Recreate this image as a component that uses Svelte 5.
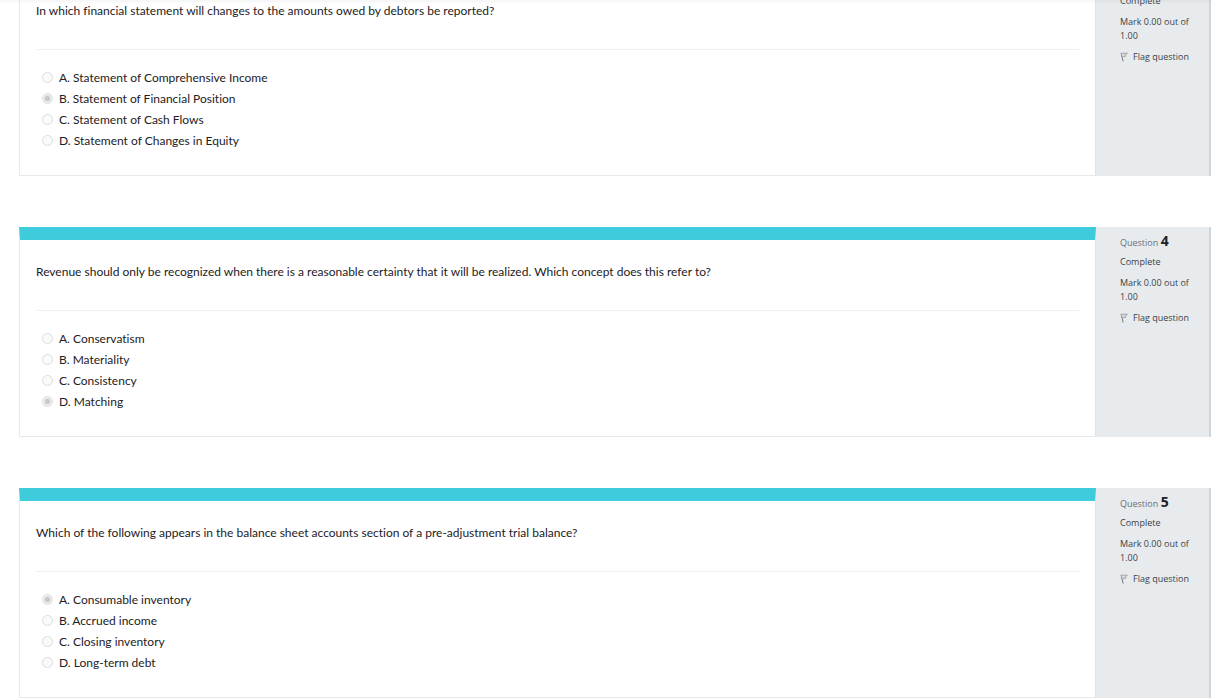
<script lang="ts">
  const questions = [
    {
      number: 3,
      text: 'In which financial statement will changes to the amounts owed by debtors be reported?',
      answers: [
        'Statement of Comprehensive Income',
        'Statement of Financial Position',
        'Statement of Cash Flows',
        'Statement of Changes in Equity'
      ],
      selected: 1
    },
    {
      number: 4,
      text: 'Revenue should only be recognized when there is a reasonable certainty that it will be realized. Which concept does this refer to?',
      answers: ['Conservatism', 'Materiality', 'Consistency', 'Matching'],
      selected: 3
    },
    {
      number: 5,
      text: 'Which of the following appears in the balance sheet accounts section of a pre-adjustment trial balance?',
      answers: ['Consumable inventory', 'Accrued income', 'Closing inventory', 'Long-term debt'],
      selected: 0
    }
  ];

  let flagged: number[] = $state([]);

  function toggleFlag(n: number) {
    flagged = flagged.includes(n) ? flagged.filter((f) => f !== n) : [...flagged, n];
  }
</script>

<main class="review">
  <div class="questions">
    {#each questions as question}
      <section class="question">
        <div class="content">
          <p class="question-text" id="q{question.number}-text">{question.text}</p>
          <div class="answers" role="radiogroup" aria-labelledby="q{question.number}-text">
            {#each question.answers as answer, i}
              <label class="answer">
                <input type="radio" name="q{question.number}" checked={question.selected === i} disabled />
                <span>{'ABCD'[i]}. {answer}</span>
              </label>
            {/each}
          </div>
        </div>

        <aside class="info">
          <h3 class="number">Question <strong>{question.number}</strong></h3>
          <div class="state">Complete</div>
          <div class="grade">Mark 0.00 out of 1.00</div>
          <button
            class="flag"
            aria-pressed={flagged.includes(question.number)}
            onclick={() => toggleFlag(question.number)}
          >
            <svg viewBox="0 0 8 10" width="8" height="10" aria-hidden="true">
              <path d="M1 1 L3.2 9.5" stroke="#777" fill="none" />
              <path d="M1 1.2 H7.5 L5.6 2.8 L5.8 4.2 L2.2 4.8" stroke="#999" stroke-width="0.8" fill="#d4d6d8" />
            </svg>
            <span>Flag question</span>
          </button>
        </aside>
      </section>
    {/each}
  </div>
</main>

<style>
  :global(body) {
    background: #fff;
  }

  .review {
    position: relative;
    overflow: hidden;
    font-family: 'Segoe UI', 'Open Sans', 'Noto Sans', sans-serif;
    font-size: 12px;
    color: #1d2125;
  }

  /* shadow under the page header */
  .review::before {
    content: '';
    position: absolute;
    z-index: 1;
    top: 0;
    left: 0;
    right: 0;
    height: 4px;
    background: linear-gradient(rgba(0, 0, 0, 0.04), transparent);
  }

  /* the page is scrolled part way into the first question */
  .questions {
    display: flex;
    flex-direction: column;
    gap: 51px;
    margin-top: -34px;
    padding-left: 19px;
  }

  .question {
    display: flex;
  }

  .content {
    flex: 1;
    box-sizing: border-box;
    min-width: 0;
    padding: 22px 16px 24px;
    border: 1px solid #e7eaec;
    border-top: 13px solid #3ecbdb;
    border-right-color: #dfe3e7;
    font-family: 'Segoe UI', Lato, sans-serif;
    font-variant-ligatures: none;
  }

  .question-text {
    margin: 0;
    padding-bottom: 28px;
    line-height: 20px;
    border-bottom: 1px solid #eeeff0;
  }

  .answers {
    display: flex;
    flex-direction: column;
    padding: 17px 0 0 6px;
  }

  .answer {
    display: flex;
    align-items: center;
    gap: 6px;
    line-height: 21px;
  }

  .answer input {
    appearance: none;
    box-sizing: border-box;
    width: 11px;
    height: 11px;
    margin: 0;
    border: 1px solid #dcdcdc;
    border-radius: 50%;
    background: #fafafa;
  }

  .answer input:checked {
    background: radial-gradient(circle, #c9c9c9 0 2px, #f4f4f4 4px);
  }

  .info {
    flex: 0 0 115px;
    box-sizing: border-box;
    padding: 4px 16px 0 24px;
    background: #e7ebee;
    border-right: 2px solid #d0d4de;
    font-size: 9px;
    line-height: 14px;
    color: #3c4248;
  }

  .number {
    margin: 0;
    font-size: 9px;
    font-weight: 400;
    line-height: 20px;
    color: #6a7076;
  }

  .number strong {
    font-size: 14px;
    font-weight: 700;
    color: #1d2125;
  }

  .state,
  .grade {
    margin: 2px 0 7px;
  }

  .flag {
    display: flex;
    align-items: center;
    gap: 5px;
    padding: 0;
    border: 0;
    background: none;
    font: inherit;
    color: inherit;
    white-space: nowrap;
    cursor: pointer;
  }
</style>
